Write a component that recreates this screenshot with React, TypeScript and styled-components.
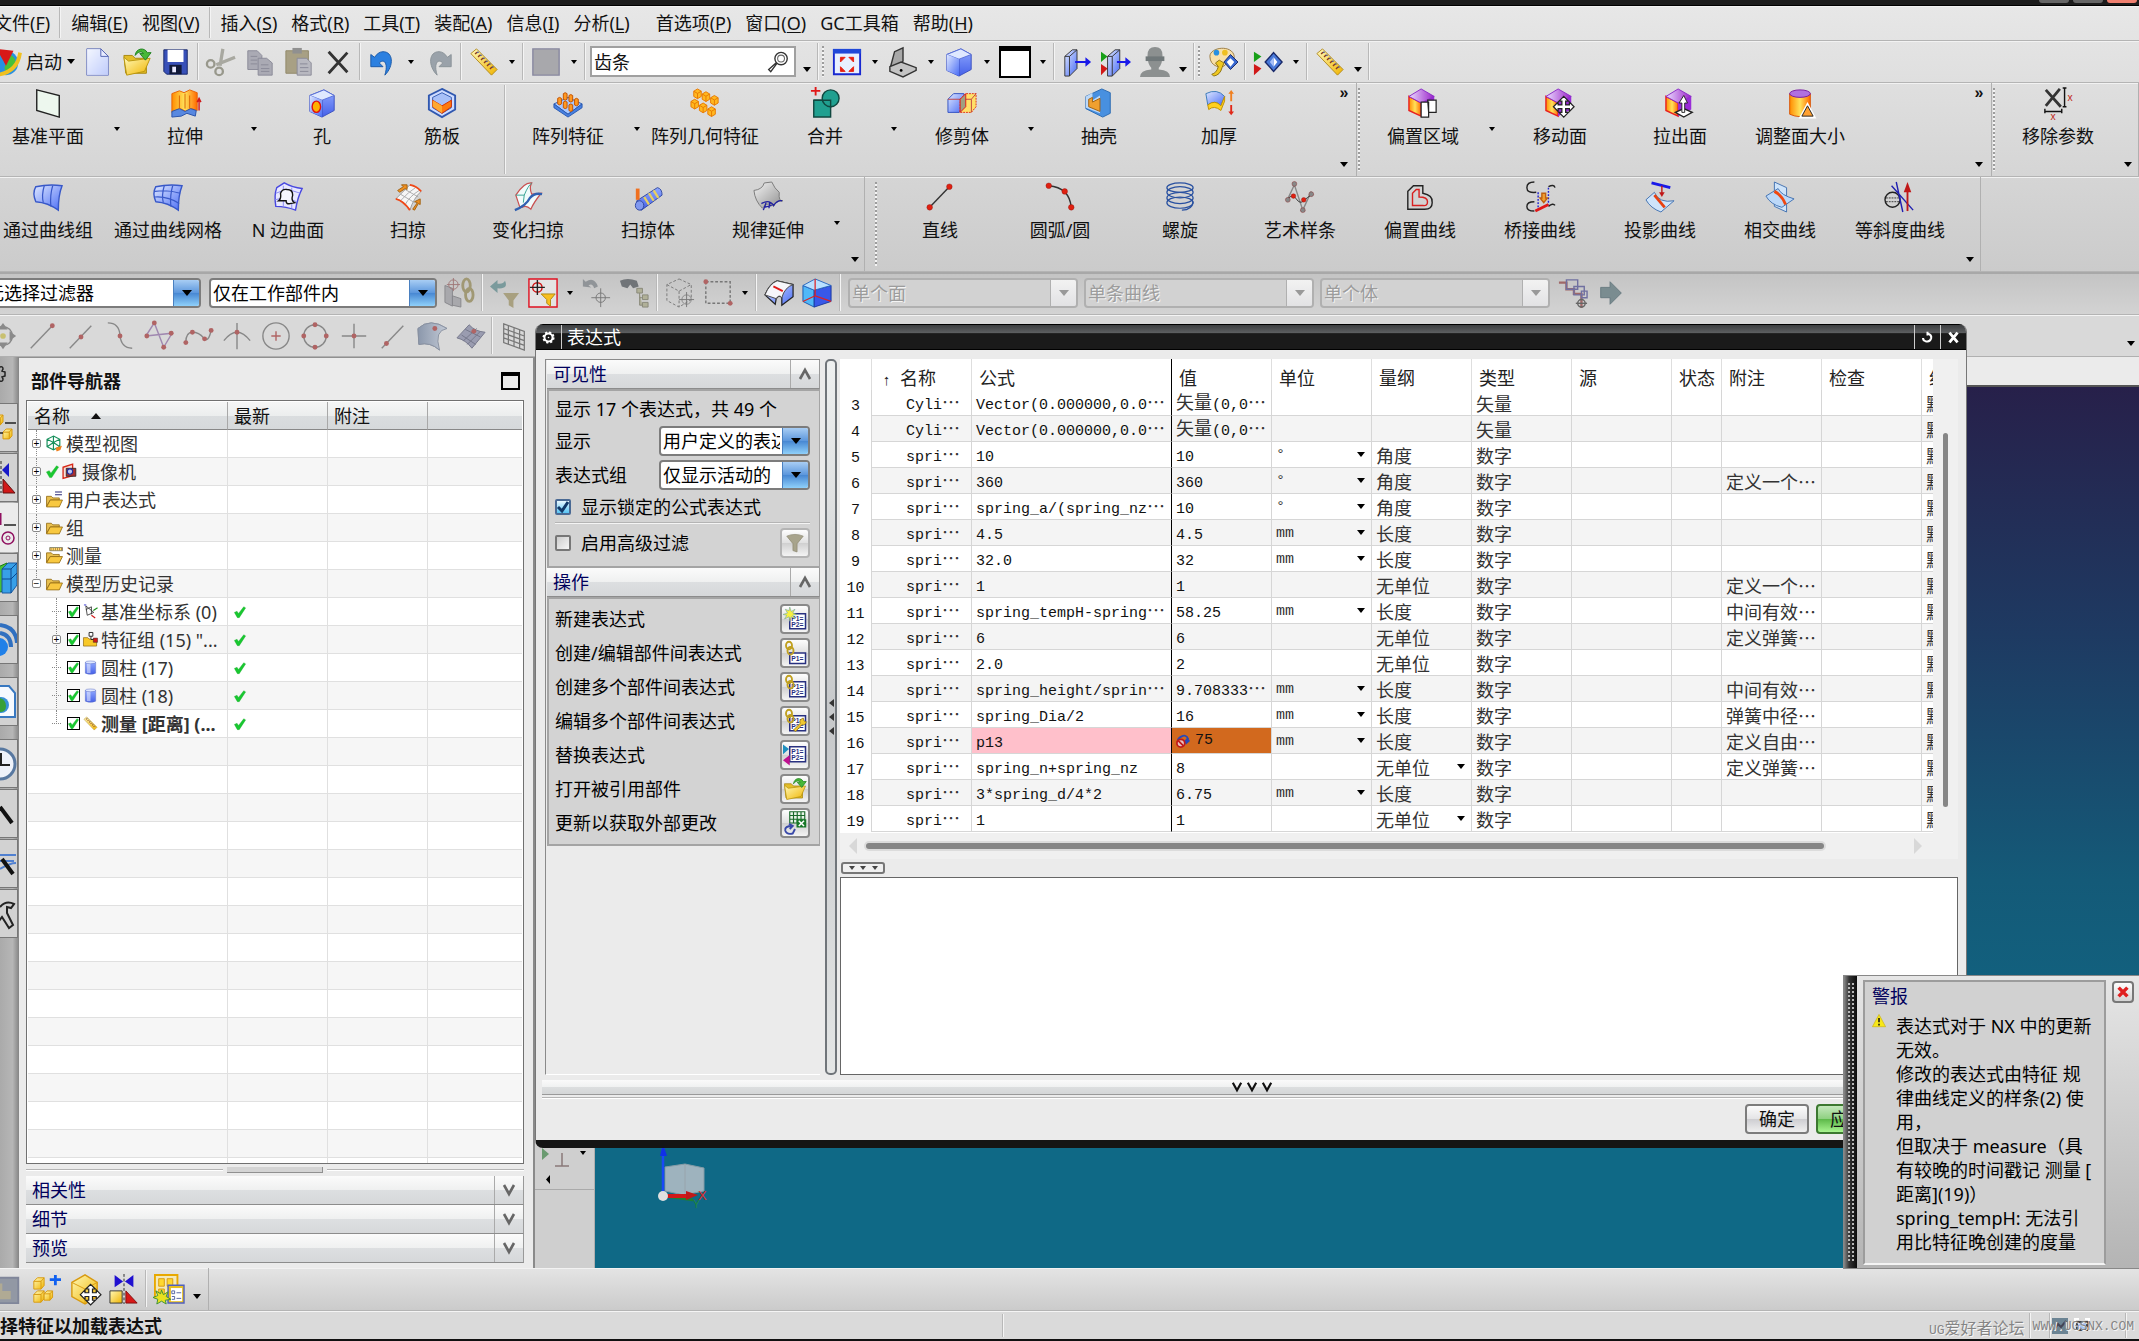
import React from "react";
import styled, { createGlobalStyle, css } from "styled-components";

const ui = `"Noto Sans", "Noto Sans CJK SC", sans-serif`;
const song = `"Noto Sans CJK SC", sans-serif`;
const mono = `"Liberation Mono", "Noto Sans CJK SC", monospace`;

const Global = createGlobalStyle`
  * { box-sizing: border-box; }
  body { margin: 0; overflow: hidden; font: 18px/24px ${ui}; color: #111; background: #d8d8d8; }
  button, input, select, textarea { font: inherit; color: inherit; margin: 0; }
  button { border: 0; background: none; padding: 0; }
  svg { display: block; flex: none; overflow: visible; }
`;

/* ---------- icons ---------- */

const Defs = () => (
  <HiddenSvg width="0" height="0" aria-hidden="true">
    <defs>
      <linearGradient id="blue" x1="0" y1="0" x2="1" y2="1"><stop offset="0" stopColor="#dfe8ff" /><stop offset="1" stopColor="#4a6df5" /></linearGradient>
      <linearGradient id="deep" x1="0" y1="0" x2="0" y2="1"><stop offset="0" stopColor="#8fa8ff" /><stop offset="1" stopColor="#4560e8" /></linearGradient>
      <linearGradient id="gold" x1="0" y1="0" x2="1" y2="1"><stop offset="0" stopColor="#fff9b8" /><stop offset="1" stopColor="#f0b400" /></linearGradient>
      <linearGradient id="orange" x1="0" y1="0" x2="1" y2="0"><stop offset="0" stopColor="#ff8c00" /><stop offset=".5" stopColor="#ffe25a" /><stop offset="1" stopColor="#ff6a00" /></linearGradient>
      <linearGradient id="purple" x1="0" y1="0" x2="1" y2="0"><stop offset="0" stopColor="#eadcff" /><stop offset="1" stopColor="#9a22c8" /></linearGradient>
      <linearGradient id="grey" x1="0" y1="0" x2="1" y2="1"><stop offset="0" stopColor="#f4f4f4" /><stop offset="1" stopColor="#8c8c8c" /></linearGradient>
      <linearGradient id="slate" x1="0" y1="0" x2="1" y2="0"><stop offset="0" stopColor="#8b97ab" /><stop offset="1" stopColor="#c3cad6" /></linearGradient>
    </defs>
  </HiddenSvg>
);

const HiddenSvg = styled.svg`position: absolute;`;

const cube = (
  <>
    <path d="M3 8 18 2 29 8v16l-13 7-13-6z" fill="url(#deep)" stroke="#3a4fc0" />
    <path d="M3 8 18 2 29 8 16 13z" fill="#dfe8ff" stroke="#5a70d8" />
    <path d="M16 13v18" stroke="#3a4fc0" />
    <path d="M3 8 16 13v18L3 25z" fill="url(#blue)" />
  </>
);
const faceCube = (
  <>
    <path d="M1 9 14 16v14L1 24z" fill="url(#orange)" stroke="#e82020" strokeWidth="1.5" />
    <path d="M14 16 28 9v14l-14 7z" fill="#9a2cd8" />
    <path d="M1 9 14 1l14 8-14 7z" fill="url(#purple)" stroke="#8a28c8" />
  </>
);
const ruler = (
  <>
    <path d="M2 7 8 2 30 24l-6 6z" fill="url(#gold)" stroke="#b08a20" />
    <path d="m7 6 19 19" stroke="#8a3a20" strokeWidth="3" strokeDasharray="1.5 3" />
    <path d="m9 5 18 18" stroke="#3040a0" strokeWidth="1.5" strokeDasharray="1.5 3" />
  </>
);
const folder = (
  <>
    <path d="M2 9h9l3 3h12v16H4z" fill="#e3bd28" stroke="#a8860c" />
    <path d="M7 15 30 12l-6 14L5 30 2 11z" fill="url(#gold)" stroke="#b8940c" />
    <path d="M14 9C15 1 24 0 27 6h4l-6 8-6-7h4c-2-3-6-2-9 2z" fill="#48b838" stroke="#208020" />
  </>
);
const moveCross = (x: number, y: number) => (
  <path transform={`translate(${x} ${y})`} d="m0-11 5 5H2v4h4v-3l5 5-5 5V2H2v4h3l-5 5-5-5h3V2h-4v3l-5-5 5-5v3h4v-4h-3z" fill="#fff" stroke="#222" strokeWidth="1.3" />
);
const box = (x: number, y: number, s = 7) => (
  <g key={`${x}-${y}`} transform={`translate(${x} ${y})`}>
    <path d={`M0 ${s * 0.3} ${s * 0.5} 0 ${s} ${s * 0.3} ${s} ${s} ${s * 0.5} ${s * 1.3} 0 ${s}z`} fill="#ffb820" stroke="#e87800" />
    <path d={`M0 ${s * 0.3} ${s * 0.5} ${s * 0.6} ${s} ${s * 0.3}M${s * 0.5} ${s * 0.6}V${s * 1.3}`} fill="none" stroke="#e87800" />
  </g>
);
const goldBox = (x: number, y: number, s: number) => (
  <g transform={`translate(${x} ${y})`}>
    <path d={`M0 ${s * 0.35} ${s * 0.35} 0H${s}V${s * 0.75}L${s * 0.7} ${s * 1.1}H0z`} fill="url(#gold)" stroke="#d89a10" />
    <path d={`M0 ${s * 0.35}H${s * 0.7}V${s * 1.1}M${s * 0.7} ${s * 0.35} ${s} 0`} fill="none" stroke="#d89a10" />
  </g>
);
const rdot = (x: number, y: number, r = 2.5, c = "#e02010") => <circle key={`${x}_${y}`} cx={x} cy={y} r={r} fill={c} stroke="#801010" strokeWidth=".4" />;
const mdot = (x: number, y: number) => <circle key={`${x}_${y}`} cx={x} cy={y} r="2.6" fill="#b06464" />;
const sheet = (x = 8, y = 8, two = true) => (
  <g transform={`translate(${x} ${y})`}>
    <path d={two ? "M0 0h21v20H0z" : "M0 4h21v14H0z"} fill="#fff" stroke="#283080" strokeWidth="2" />
    <text x="2" y={two ? 9 : 15} fontSize="9" fontWeight="700" fontFamily="Liberation Sans, sans-serif" fill="#283080">P1=</text>
    {two && <text x="2" y="18" fontSize="9" fontWeight="700" fontFamily="Liberation Sans, sans-serif" fill="#283080">P2=</text>}
  </g>
);
const chain = (c: string) => (
  <g fill="none" stroke={c} strokeWidth="2.5"><ellipse cx="8" cy="6" rx="4" ry="5" /><ellipse cx="10" cy="13" rx="4" ry="5" /></g>
);

const icons: Record<string, React.ReactNode> = {
  nx: <><circle cx="16" cy="17" r="13" fill="#2890e0" /><path d="M14 6q12 2 12 10t-8 12q-6-4-2-10t-2-12" fill="#48c038" /><path d="M4 30Q28 28 31 6" fill="none" stroke="#f0c020" strokeWidth="4" /><path d="M6 2 24 4 16 20z" fill="#d81818" /></>,
  file: <><path d="M4 2h15l8 8v20H4z" fill="url(#blue)" stroke="#5060b0" /><path d="M4 2h15l8 8v20H4z" fill="#fff" fillOpacity=".65" /><path d="M19 2v8h8z" fill="#e8ecff" stroke="#5060b0" /></>,
  open: folder,
  save: <><path d="M3 3h25v26H6l-3-3z" fill="#3850b8" stroke="#182868" /><path d="M7 3h17v13H7z" fill="#fff" /><path d="M9 19h13v10H9z" fill="#101838" /><path d="M12 21h4v6h-4z" fill="#e8e8ff" /></>,
  cut: <g stroke="#98988c" fill="none" strokeWidth="2.5"><path d="M18 2 15 20M31 11 11 19" stroke="#a8a8a0" strokeWidth="3.5" /><circle cx="5" cy="18" r="4" /><circle cx="14" cy="26" r="4" /></g>,
  copy: <g fill="#aaaab4" stroke="#8a8a98"><path d="M3 4h10l5 5v15H3z" /><path d="M14 12h9l6 5v13H14z" /><path d="M6 10h7M6 14h7M6 18h7M17 19h8M17 23h9M17 26h9" /></g>,
  paste: <g><path d="M2 4h24v24H2z" fill="#a8a084" stroke="#908868" /><path d="M9 1h10v6H9z" fill="#909090" /><path d="M14 12h10l5 5v13H14z" fill="#b8b8c0" stroke="#8a8a98" /><path d="M17 18h8M17 22h9M17 26h9" stroke="#8a8a98" /></g>,
  del: <path d="M6 5 26 27M26 6 6 28" stroke="#333" strokeWidth="3" />,
  undo: <path d="M3 8v13h13l-4-4c5-5 10 0 6 13C28 20 27 5 16 5c-4 0-7 3-9 6z" fill="#2c80e0" stroke="#1858a8" />,
  redo: <path d="M29 8v13H16l4-4c-5-5-10 0-6 13C4 20 5 5 16 5c4 0 7 3 9 6z" fill="#9aa2aa" stroke="#8a9298" />,
  ruler,
  swatch: <path d="M2 2h28v28H2z" fill="#a8a8ac" stroke="#8888a0" strokeWidth="1.5" />,
  fit: <><path d="M2 3h28v26H2z" fill="#e8f0ff" stroke="#1828d0" strokeWidth="2" /><path d="M1 2h30v5H1z" fill="#2048d8" /><path d="M9 11h5l-5 5zM23 11h-5l5 5zM9 26h5l-5-5zM23 26h-5l5-5z" fill="#e82010" stroke="#e82010" /></>,
  seat: <><path d="M3 20 7 5l9-4v14l-4 6z" fill="#a8a8a8" stroke="#333" strokeWidth="1.5" /><path d="m2 21 12-5 16 6v3l-14 7-14-6z" fill="#c4c4c4" stroke="#333" strokeWidth="1.5" /><circle cx="14" cy="25" r="1.5" /></>,
  cube,
  white: <><path d="M1 1h30v30H1z" fill="#fff" stroke="#000" strokeWidth="2" /><path d="M0 0h32v5H0z" /></>,
  clip: <><path d="M3 10 11 3h5v20l-8 8H3z" fill="url(#blue)" stroke="#333" /><path d="M3 10h5v21M8 10l8-7" fill="none" stroke="#333" /><path d="M14 15h11v-4l6 5-6 5v-4H14z" fill="#1818e8" /></>,
  clip2: <><path d="m0 5 7 5-7 6z" fill="#18a018" /><path d="m0 18 7 5-7 7z" fill="#d01818" /><path d="M7 10 15 3h5v20l-8 8H7z" fill="url(#blue)" stroke="#333" /><path d="M7 10h5v21M12 10l8-7" fill="none" stroke="#333" /><path d="M17 15h9v-4l6 5-6 5v-4h-9z" fill="#1818e8" /></>,
  person: <><path d="M8 9q0-9 8-9t8 9q0 9-4 13v2q12 1 12 8H0q0-7 12-8v-2Q8 18 8 9z" fill="#8c9090" /><path d="M6 10h20v5H6z" fill="#70787a" /></>,
  palette: <><path d="M2 10C2 0 26-3 28 10c0 8-8 4-9 8-2 6-17 4-17-8z" fill="#f8e0a8" stroke="#9a7a40" /><circle cx="9" cy="6" r="3" fill="#2890e0" /><circle cx="18" cy="6" r="3" fill="#f0c020" /><circle cx="24" cy="11" r="2" fill="#e02020" /><path d="m24 8 8 8-8 8-7-8z" fill="#3868d0" stroke="#182868" /><path d="m24 12 4 4-4 5-4-5z" fill="#fff" /><path d="M4 29q5-1 7-8l-3-4 4-3 5 3-2 5q-2 8-9 9z" fill="#f0c820" stroke="#8a7010" /></>,
  vis: <><path d="m1 5 8 5-8 6z" fill="#18a018" /><path d="m1 18 8 5-8 7z" fill="#d01818" /><path d="m22 6 9 10-9 10-9-10z" fill="#4878d8" stroke="#182868" strokeWidth="1.5" /><path d="m22 11 4 5-4 5z" fill="#fff" /><path d="m22 11-4 5 4 5z" fill="#a8c0f8" /></>,
  plane: <path d="M4 2 28 8v23L4 24z" fill="#edf7ee" stroke="#222" strokeWidth="1.5" />,
  extrude: <><path d="M2 6 10 3l5 2 6-3 8 3v19l-6-2-6 3-6-3-9 4z" fill="url(#orange)" stroke="#e86000" /><path d="M2 25l8-3 6 3 6-3 6 2-1 6-9-3-6 3-10 1z" fill="#5888e0" stroke="#2850a8" /><path d="M10 8v14M16 6v16M21 8v14" stroke="#d86000" /><path d="M31 24V13M29 15l2-4 2 4" stroke="#d01818" fill="none" strokeWidth="1.5" /></>,
  hole: <>{cube}<ellipse cx="10" cy="20" rx="4.500" ry="6" fill="#ffb000" stroke="#e01010" strokeWidth="1.500" /></>,
  rib: <><path d="m16 1 14 7v15l-14 8L2 23V8z" fill="#cfdcff" stroke="#3058b0" strokeWidth="2" /><path d="m16 5 10 5v11l-10 6-10-6V10z" fill="#a8c0f8" stroke="#3058b0" /><path d="m6 13 10 6 10-6v7l-10 7-10-7z" fill="#ff7a10" stroke="#d83000" /><path d="m6 13 10 6v8l-10-7z" fill="#ffa830" /></>,
  array: <><path d="m1 17 15-7 15 7-15 11z" fill="#a8c8ff" stroke="#2858b0" /><path d="M1 17v4l15 10 15-10v-4L16 28z" fill="#4880e0" stroke="#2858b0" />{[[7, 11], [13, 6], [19, 8], [25, 12], [13, 15], [19, 18]].map(([x, y]) => <path key={`${x},${y}`} d={`M${x - 2} ${y}q2-2 4 0v6q-2 2-4 0z`} fill="#ff9820" stroke="#c05000" />)}</>,
  geo: <>{[[4, 1], [13, 4], [22, 8], [1, 12], [10, 16], [19, 20]].map(([x, y]) => box(x, y, 8))}</>,
  unite: <><path d="M4 13h18v18H4z" fill="#20a090" stroke="#104840" strokeWidth="1.500" /><circle cx="22" cy="11" r="9" fill="#20a090" stroke="#104840" strokeWidth="1.500" /><path d="M4 13h18v8" fill="none" stroke="#104840" strokeWidth="1.500" /><path d="M6-1v9M1 3h10" stroke="#e01818" strokeWidth="2" /></>,
  trim: <><path d="M1 12 7 6h11v14l-5 6H1z" fill="url(#blue)" stroke="#3050c0" /><path d="M14 12l6-6h11v14l-5 6H14z" fill="#ffe068" stroke="#e03010" strokeDasharray="2 1" /><path d="M1 12h25v14M26 12l5-6" fill="none" stroke="#c04040" /><path d="M14 12l6-6v14l-6 6z" fill="#a0a080" stroke="#e01818" /></>,
  shell: <><path d="M2 9 19 1l9 4v22l-8 4L2 22z" fill="#4890e0" stroke="#2868b0" /><path d="m2 9 7-4v8l8-5v19L2 21z" fill="#bcd8f8" /><path d="m5 12 4-2v5l8-4v14L5 20z" fill="#f0a030" stroke="#a06010" /></>,
  thick: <><path d="M2 6q12-6 20 3l-4 10Q12 12 4 18z" fill="url(#blue)" stroke="#3878b8" /><path d="M4 18q8-6 14 1l4-10v5l-4 10q-7-6-13-1z" fill="#ffd020" stroke="#c09000" /><path d="M28 14V6h-2l3-4 3 4h-2v8z" fill="#f08020" /><path d="M28 18v7h-2l3 4 3-4h-2v-7z" fill="#e02818" /></>,
  offReg: <>{faceCube}<path d="M14 15h8v16h-8zM21 13h9v13h-8z" fill="#fff" stroke="#222" strokeWidth="1.300" /></>,
  moveFace: <>{faceCube}{moveCross(20, 20)}</>,
  pull: <>{faceCube}<path d="m11 26 9-4 9 4-9 5z" fill="#fff" stroke="#222" strokeWidth="1.500" /><path d="m20 8 4 8h-3v10h-3V16h-3z" fill="#fff" stroke="#222" /></>,
  resize: <><path d="M5 6v22q11 5 22 0V6z" fill="url(#orange)" stroke="#d85000" /><ellipse cx="16" cy="6" rx="11" ry="4" fill="#b070e0" stroke="#7818a0" /><path d="m24 18 7 13H17z" fill="#ffa030" stroke="#fff" strokeWidth="3" /><path d="m24 19 6 11H18z" fill="#ffa030" stroke="#222" /></>,
  rmParam: <><path d="M3 2 19 20M18 1 3 19" stroke="#333" strokeWidth="3" /><path d="M23 0v20M21 0h4M21 20h4M2 25h18M2 22v5M20 22v5" stroke="#111" strokeWidth="1.500" /><text x="26" y="14" fontSize="11" fontFamily="Liberation Sans, sans-serif" fill="#c02818">x</text><text x="8" y="34" fontSize="11" fontFamily="Liberation Sans, sans-serif" fill="#c02818">x</text></>,
  curves: <><path d="M3 5q14-3 28-1-4 10-4 26Q16 22 3 21-1 12 3 5z" fill="url(#blue)" stroke="#3858c8" strokeWidth="1.500" /><path d="M12 4q-3 10-1 18M21 4q-3 10-2 22" fill="none" stroke="#3858c8" strokeWidth="1.300" /></>,
  mesh: <><path d="M3 5q14-3 28-1-4 10-4 26Q16 22 3 21-1 12 3 5z" fill="url(#blue)" stroke="#3858c8" strokeWidth="1.500" /><path d="M12 4q-3 10-1 18M21 4q-3 10-2 22M2 10q14-2 27 2M2 16q14-1 26 7" fill="none" stroke="#3858c8" strokeWidth="1.300" /></>,
  nside: <><path d="M4 6 12 1q9 5 19 6-5 10-7 23Q14 26 3 26 1 14 4 6z" fill="#e8e8ff" stroke="#4848e0" strokeWidth="1.500" /><path d="M3 12q12-6 26 0M2 19q12-4 23 2M11 4v22M20 6v22" fill="none" stroke="#8888f0" /><path d="M6 20q3-2 2-8 2-5 7-4 6 0 6 6-2 6 2 8l-5 1q-4 1-4-3H6z" fill="#f4f4ff" stroke="#111" strokeWidth="1.500" /></>,
  sweep: <><path d="M3 18 18 3q7 1 12 7-8 7-12 20Q12 20 3 18z" fill="#f6f6f6" stroke="#999" /><path d="m8 13 15 9M13 8l14 8M8 20Q17 10 24 6M13 24Q18 15 28 9" stroke="#aaa" fill="none" /><path d="M18 3q7 1 12 7M3 18q8 2 15 12" fill="none" stroke="#f04818" strokeWidth="2" /><path d="m5 9 6-4-2-2h6v5l-2-1-6 4zM21 29l5-7-3-1 6-3v6l-2-1-4 7z" fill="#f09020" stroke="#a06010" /></>,
  varsweep: <><path d="M7 26 3 14Q12 0 20 1q-3 5 0 12l10-1Q22 22 19 29q-5-5-9-2z" fill="#f0fbfb" stroke="#c85050" strokeWidth="1.300" /><path d="M3 14h9l-1 8M12 14Q16 4 20 1" fill="none" stroke="#30a090" /><path d="M2 30Q14 25 18 17q5-6 13-4" fill="none" stroke="#3060b0" strokeWidth="2.500" /></>,
  tube: <><path d="M4 20 26 6q5 1 5 8L9 30q-6-1-5-10z" fill="url(#deep)" stroke="#3048a0" /><ellipse cx="7" cy="25" rx="4.500" ry="5" fill="#8098f0" stroke="#3048a0" /><path d="m12 16 5 8M17 12l5 8M22 9l5 8" stroke="#e8d060" strokeWidth="2.500" /><path d="M3 7h4v12H3z" fill="#f07020" /></>,
  law: <><path d="M1 9Q10 8 12 1l8-1q3 7 8 11-1 10 4 9-8 0-10 6-6-6-12 2Q2 20 1 9z" fill="url(#grey)" stroke="#777" /><path d="M9 23q8-5 13 2 4-6 9-5M11 30l3-8M17 28l1-7M12 27l8-2" fill="none" stroke="#2020a0" strokeWidth="1.500" /></>,
  line: <><path d="M5 27 26 5" stroke="#333" strokeWidth="1.500" />{rdot(5, 27, 3)}{rdot(26, 5, 3)}</>,
  arc: <><path d="M4 4Q26 6 28 27" fill="none" stroke="#333" strokeWidth="1.500" />{rdot(4, 4, 3)}{rdot(21, 10, 3)}{rdot(28, 27, 3)}</>,
  helix: <g fill="none" stroke="#2850a0" strokeWidth="1.300"><ellipse cx="16" cy="6" rx="14" ry="5" /><ellipse cx="16" cy="11" rx="14" ry="6" /><ellipse cx="16" cy="17" rx="14" ry="6" /><ellipse cx="16" cy="22" rx="14" ry="6" /><path d="M30 21q-1 9-12 9" /></g>,
  spline: <><path d="m3 18 7-15 9 27 9-20" fill="none" stroke="#888" strokeWidth="1.500" /><path d="M3 18q5-6 9 0t8 2 8-6" fill="none" stroke="#333" />{rdot(3, 19, 2.6, "#888")}{rdot(10, 2, 2.6, "#888")}{rdot(19, 30, 2.6, "#888")}{rdot(28, 13, 2.6, "#888")}{rdot(9, 15)}{rdot(20, 19)}</>,
  offset: <g fill="none" strokeWidth="1.500"><path d="M3 29V10l6-6h10v8q11 2 10 10 0 7-8 7z" stroke="#222" /><path d="M8 25V12l4-4h3v8q9 0 9 5t-5 4z" stroke="#d82020" /></g>,
  bridge: <g fill="none" strokeWidth="1.500"><path d="M10 0Q2 0 2 6t10 5M10 21q-8 0-8 5t8 5M25 5q6-3 7 1M25 26q5-4 7-1" stroke="#222" /><path d="M14 11v18M25 6v18" stroke="#2020d0" strokeDasharray="2 1.500" /><path d="m11 31 14-7" stroke="#e01818" strokeWidth="3" /><path d="M18 12h4v5h2l-4 5-4-5h2z" fill="#f0a030" stroke="#c06010" /></g>,
  project: <><path d="m1 19 9-8q5 12 21 9L17 32Q6 28 1 19z" fill="#cfe4fa" stroke="#4070b0" /><path d="m10 14 11 13" stroke="#e84010" strokeWidth="3" /><path d="m7 1 20 5" stroke="#1818e8" strokeWidth="3" /><path d="M18 4v8" stroke="#c01818" strokeWidth="1.500" /><path d="m15 11 3 5 3-5z" fill="#c01818" /></>,
  intersect: <><path d="m10 0 13 6v26l-13-6z" fill="#cfe4fa" stroke="#4070b0" /><path d="m1 15 13-8q3 7 17 11l-13 9Q6 24 1 15z" fill="#bcd8f8" stroke="#4070b0" /><path d="M10 10q8 4 12 14" stroke="#f04810" strokeWidth="3" fill="none" /></>,
  iso: <><circle cx="8" cy="19" r="8" fill="none" stroke="#222" strokeWidth="1.500" /><path d="M1 17h15M1 21h15" stroke="#333" strokeDasharray="2 1" /><path d="M7 4 30 30M12 0l7 32" stroke="#2020b0" strokeWidth="1.500" /><path d="M24 31V9" stroke="#c01818" strokeWidth="2" /><path d="m20 11 4-11 4 11z" fill="#c01818" /></>,
  assoc: <><path d="M1 8 9 11v19L1 26zM9 19l9 3v9l-9-2z" fill="#a8a8ac" stroke="#88888c" /><circle cx="10" cy="7" r="5" fill="none" stroke="#a07878" /><path d="M10 0v14M3 7h14" stroke="#a07878" /><g fill="none" stroke="#a09874" strokeWidth="3"><ellipse cx="24" cy="8" rx="4" ry="7" /><ellipse cx="27" cy="18" rx="4" ry="7" /></g></>,
  resetF: <><path d="M16 3q4 9-8 8v5L0 9l8-7v4q6 1 8-3z" fill="#7a9a9c" /><path d="M14 16h17l-6 8v8l-5-3v-5z" fill="#a8a080" /></>,
  redF: <><path d="M1 1h30v30H1z" fill="#e4e4e4" stroke="#e01020" strokeWidth="1.500" /><circle cx="10" cy="10" r="5" fill="none" stroke="#d01010" strokeWidth="1.500" /><path d="M10 2v16M2 10h16" stroke="#222" strokeWidth="1.500" /><path d="M14 17h15l-5 6v7l-4-3v-4z" fill="#f8c020" stroke="#b08810" /></>,
  back: <><path d="M2 9V1l3 3q9-6 13 5l-4 2Q12 5 8 8l3 2z" fill="#909498" /><g stroke="#777" fill="none"><circle cx="21" cy="21" r="5" /><path d="M21 11v20M11 21h20" /></g></>,
  find: <><path d="M1 3q8-4 18 0l2 6-6 2-3-4-3 4-6-2z" fill="#707478" /><path d="M19 11h6v5h-6zM25 18h6v5h-6zM25 26h6v5h-6zM22 16v13h3M22 21h3" fill="#b0b098" stroke="#888878" /></>,
  dashcube: <g stroke="#777" fill="none"><path d="m15 1 13 6v16l-13 8L2 24V7zM2 7l13 7 13-7M15 14v17" strokeDasharray="3 2" /><circle cx="23" cy="23" r="5" stroke="#888" /><path d="M23 15v16M15 23h16" /></g>,
  rect: <><path d="M3 4h26v23H3z" fill="none" stroke="#777" strokeWidth="1.500" strokeDasharray="3 2" />{mdot(3, 4)}{mdot(29, 27)}</>,
  slab: <><path d="M1 18Q6 6 14 3l17 4v13l-12 9v-8q-3-4-6 1l-1 6z" fill="url(#blue)" stroke="#222" strokeWidth="1.300" /><path d="M1 18Q6 6 14 3l17 4Q22 10 19 21q-3-4-6 1z" fill="#f6f6fa" stroke="#444" /><path d="m10 9 10 5" stroke="#e01818" strokeWidth="2" /></>,
  gcube: <><path d="M1 8 13 13v18L1 25z" fill="#50b8f8" stroke="#1858b0" /><path d="M13 13 31 8v17l-18 6z" fill="#3858e8" stroke="#1838a0" /><path d="m1 8 13-7 17 7-18 5z" fill="#b8e0ff" stroke="#2868c0" /><path d="M14 1v18l17 6M14 19 1 25" stroke="#e02020" fill="none" strokeWidth="1.300" /></>,
  chain: <g fill="none" strokeWidth="1.500"><path d="M1 5h8v7h8v5h8v15" stroke="#a06868" strokeWidth="2.500" /><path d="M9 2h12v10H9zM17 9h11v9H17zM25 14h6v7h-6z" stroke="#7070a0" /><circle cx="25" cy="27" r="4" stroke="#666" /><path d="M19 27h12" stroke="#666" /></g>,
  right: <path d="M5 10h10V4l12 12-12 12v-7H5z" fill="#7a8c90" stroke="#687a80" />,
  sMove: <><circle cx="16" cy="16" r="10" fill="none" stroke="#888" strokeWidth="1.500" /><path d="m16 2 5 7H11zM16 30l5-7H11zM2 16l7-5v10zM30 16l-7-5v10z" fill="#8a8a8a" /><circle cx="16" cy="16" r="3" fill="#c8c070" /></>,
  sLine: <><path d="M4 29 27 5" stroke="#888" strokeWidth="1.500" />{mdot(27, 5)}</>,
  sMid: <><path d="M4 29 27 5" stroke="#888" strokeWidth="1.500" />{mdot(16, 17)}</>,
  sCtl: <><path d="M3 2q12 0 13 13 1 14 13 14" fill="none" stroke="#888" strokeWidth="1.500" />{mdot(16, 16)}</>,
  sPoly: <><path d="m2 16 9-14 10 26 9-15L2 16" fill="none" stroke="#a088b0" strokeWidth="1.500" />{[[3, 16], [11, 2], [21, 28], [29, 13]].map(([x, y]) => mdot(x, y))}</>,
  sSpl: <><path d="M3 23q0-11 7-11t12 6 8-8" fill="none" stroke="#888" strokeWidth="1.500" />{[[3, 23], [10, 12], [23, 19], [30, 10]].map(([x, y]) => mdot(x, y))}</>,
  sInt: <><path d="M2 21q14-18 28 0M16 2v28" fill="none" stroke="#888" strokeWidth="1.500" />{mdot(16, 12)}</>,
  sCen: <><circle cx="16" cy="16" r="14" fill="none" stroke="#888" strokeWidth="1.500" /><path d="M16 11v10M11 16h10" stroke="#b06464" strokeWidth="1.500" /></>,
  sQuad: <><circle cx="16" cy="16" r="12" fill="none" stroke="#888" strokeWidth="1.500" />{[[16, 4], [16, 28], [4, 16], [28, 16]].map(([x, y]) => mdot(x, y))}</>,
  sPt: <><path d="M3 16h26M16 3v26" stroke="#888" strokeWidth="1.500" />{mdot(16, 16)}</>,
  sOn: <><path d="M4 29 27 5" stroke="#888" strokeWidth="1.500" />{mdot(9, 24)}</>,
  sFace: <><path d="M1 8Q14-4 32 8-2 6 24 31 14 22 2 25z" fill="url(#slate)" stroke="#8890a0" /><path d="M1 8Q14-4 32 8q-14 2-8 23Q14 22 2 25z" fill="url(#slate)" stroke="#8890a0" />{mdot(19, 8)}</>,
  sMesh: <><path d="M1 18 14 4q6 7 17 8L17 29Q10 20 1 18z" fill="#9a9cb0" stroke="#74768a" /><path d="m6 15 15 10M10 9l16 8M8 21 22 8M12 25 26 11" stroke="#74768a" />{mdot(19, 11)}</>,
  sGrid: <path d="M5 3 27 11v20L5 23zM5 8l22 8M5 13l22 8M5 18l22 8M10 5v20M16 7v20M22 9v20" fill="none" stroke="#777" strokeWidth="1.300" />,
  b0: <><path d="M-8 4h36v27H-8z" fill="#9298a4" stroke="#80869a" strokeWidth="2" /><path d="M2 10h9v8h9v9H-6v-9h8z" fill="#b0aa94" /></>,
  bAdd: <>{goldBox(3, 4, 11)}{goldBox(3, 18, 11)}{goldBox(14, 18, 9)}<path d="M26 1v11M20 6h12" stroke="#1060f0" strokeWidth="3" /></>,
  bMove: <><path d="m2 9 14-8 13 8v15l-13 8-14-8z" fill="url(#gold)" stroke="#d89a10" strokeWidth="1.500" /><path d="m2 9 14 7 13-7M16 16v16" stroke="#d89a10" fill="none" />{moveCross(22, 22)}</>,
  bMir: <><path d="M6 1v13l9-6zM26 1v13l-9-6z" fill="#2010d0" /><path d="M1 18h13v13H1z" fill="url(#gold)" stroke="#333" /><path d="M18 18v13h12z" fill="#d81818" stroke="#801010" /><path d="M16 0v32" stroke="#222" strokeDasharray="3 2" /></>,
  bClip: <><path d="M1 1h24v24H1z" fill="#f4e9b8" stroke="#e8a800" strokeWidth="2" /><path d="M5 5h6v8H5zM14 5h6v8h-6zM5 16h6v7H5z" fill="#ffd830" stroke="#d89a10" /><path d="M15 12h17v19H15z" fill="#e8c020" stroke="#5060c0" strokeWidth="1.500" /><path d="M18 15h12v14H18z" fill="#fff" /><path d="M19 18h3v3h-3zM19 24h3v3h-3M24 20h5M24 26h5" fill="none" stroke="#5060a0" /><path d="m8 17 2 5 5-3-2 5 5 3-6 1 1 4-5-3-5 3 1-5-5-2 5-2-2-5 5 3z" fill="#e8e020" stroke="#389038" /></>,
  funnel: <path d="M4 6q12-5 24 0l-9 11v12l-6-2V17z" fill="#a8a48c" stroke="#8c8870" />,
  newExp: <>{sheet(9, 9)}<path d="m9 0 2 6 5-3-3 5 6 2-6 1 3 5-5-3-2 6-1-6-6 3 3-5-5-1 6-2-3-5 5 2z" fill="#f8f040" stroke="#70a8a0" strokeWidth=".8" /></>,
  exp1: <>{sheet(9, 12, false)}{chain("#c0a020")}</>,
  exp2: <>{sheet(9, 9)}{chain("#c0a020")}</>,
  exp3: <>{sheet(9, 9)}{chain("#c0a020")}<path d="m14 28 9-9q-2-5 4-7l1 4 3 1q-1 5-6 4l-8 9z" fill="#f0c830" stroke="#907010" /></>,
  repl: <>{sheet(9, 5)}<path d="m0 2 8 6-8 7z" fill="#2090c0" /><path d="m9 16-9 7 9 7z" fill="#c01090" /></>,
  excel: <><path d="M9 1h20v15H9zM9 6h20M9 11h20M14 1v15M19 1v15M24 1v15" fill="#e8f4e8" stroke="#186828" strokeWidth="1.500" /><path d="M18 11h13v11H18z" fill="#187828" /><path d="m21 13 7 7M28 13l-7 7" stroke="#fff" strokeWidth="2" /><path d="M12 20q-10 0-9 6 2 6 10 4l3-6M8 17l5 3-4 4" fill="none" stroke="#3848a8" strokeWidth="2.500" /></>,
  gear: <><circle cx="16" cy="16" r="10" fill="none" stroke="currentColor" strokeWidth="5" /><circle cx="16" cy="16" r="12" fill="none" stroke="currentColor" strokeWidth="6" strokeDasharray="5 4.400" /><circle cx="16" cy="16" r="2" fill="currentColor" /></>,
  reset: <path d="M16 6q11 3 9 12-3 10-14 7-6-2-6-8M16 2v9" fill="none" stroke="#fff" strokeWidth="5" />,
  close: <path d="M6 4 26 28M26 4 6 28" stroke="#fff" strokeWidth="7" />,
  redx: <path d="M6 6 26 26M26 6 6 26" stroke="#e02020" strokeWidth="8" />,
  glass: <><circle cx="19" cy="11" r="9" fill="none" stroke="#333" strokeWidth="2" /><circle cx="19" cy="11" r="5" fill="none" stroke="#666" strokeWidth="1.500" /><path d="m13 18-9 12-3-3 11-10" fill="none" stroke="#333" strokeWidth="2" /></>,
  warn: <><path d="m16 1 15 28H1z" fill="#f8e818" stroke="#c8b010" strokeWidth="1.500" /><path d="M16 9v10M16 22v4" stroke="#111" strokeWidth="3.500" /></>,
  tView: <><path d="m14 2 12 6v14l-12 6-12-6V8zM2 8l12 6 12-6M14 14v14M14 2v12M2 22l12-8 12 8" fill="none" stroke="#18905c" strokeWidth="2.200" /><path d="m18 24 12-4-3 8-7 3z" fill="#f08020" /></>,
  tCam: <><path d="m2 8 18-6v22L2 29z" fill="#f8e0d8" stroke="#d82818" strokeWidth="2.500" /><path d="M8 10h18v15H8z" fill="#a83030" stroke="#222" strokeWidth="1.500" /><circle cx="15" cy="16" r="5" fill="#c0c8f0" stroke="#2030a0" strokeWidth="2" /></>,
  tFold: <><path d="M1 8h9l3 3h12v4H8L1 27z" fill="#e8c050" stroke="#906810" strokeWidth="1.500" /><path d="M8 15h23l-6 13H1z" fill="#f8c840" stroke="#906810" strokeWidth="1.500" /></>,
  tExp: <><path d="M1 10h9l3 3h12v4H8L1 29z" fill="#e8c050" stroke="#906810" strokeWidth="1.500" /><path d="M8 17h23l-6 13H1z" fill="#f8c840" stroke="#906810" strokeWidth="1.500" /><path d="M17 2h13M17 7h13" stroke="#282878" strokeWidth="2" /></>,
  tMea: <><path d="M1 11h9l3 3h12v4H8L1 29z" fill="#e8c050" stroke="#906810" strokeWidth="1.500" /><path d="M8 18h23l-6 12H1z" fill="#f8c840" stroke="#906810" strokeWidth="1.500" /><path d="M7 1h24v6H7z" fill="#f8e868" stroke="#333" /><path d="M9 4h21" stroke="#a03030" strokeWidth="4" strokeDasharray="1 3" /></>,
  tCsys: <g fill="none" stroke="#333" strokeWidth="1.800"><path d="m6 4 3 20 14-6zM6 12l12-6v16" /><path d="m22 14 9-6" stroke="#189018" strokeWidth="2.500" /><path d="m18 24 8 6" stroke="#d01818" strokeWidth="2.500" /><path d="M2 2h5" stroke="#2020d0" /></g>,
  tGrp: <><path d="M1 12h9l3 3h16v15H1z" fill="#f8c828" stroke="#906810" strokeWidth="1.500" /><path d="M13 1h8v8h-8zM17 9v7h6" fill="#fff" stroke="#222" strokeWidth="2" /><path d="M22 13h9v9h-9z" fill="#d01818" stroke="#222" /></>,
  tCyl: <><path d="M5 5v23q11 5 22 0V5z" fill="url(#deep)" stroke="#5868c0" /><path d="M8 6v22h8V6z" fill="#fff" opacity=".5" /><ellipse cx="16" cy="5" rx="11" ry="3" fill="#dfe8ff" stroke="#5868c0" /></>,
  tRul: ruler,
  check: <path d="m1 17 7-3 4 6L26 2l5 3-17 26h-5z" fill="#18c830" stroke="#18a828" />,
  link: <><path d="M28 12q-4-12-16-6-8 4-8 10" fill="none" stroke="#2848b8" strokeWidth="4" /><path d="m26 8 6 8-9 8-5-7z" fill="#2848b8" /><circle cx="11" cy="21" r="9" fill="#e8c0c0" stroke="#c01818" strokeWidth="4" /><path d="m5 15 12 12" stroke="#c01818" strokeWidth="4" /></>,
};

const Icon = ({ name, size = 32 }: { name: string; size?: number }) => (
  <svg width={size} height={size} viewBox="0 0 32 32" aria-hidden="true">{icons[name]}</svg>
);

/* ---------- shared parts ---------- */

const barLine = css`border-bottom: 1px solid #b4b4b4; box-shadow: inset 0 1px #f2f2f2;`;

const Frame = styled.div`position: relative; display: flex; flex-direction: column; height: 100vh; overflow: hidden;`;

const TopStrip = styled.header`
  height: 6px; flex: none; background: #1c1c1c; border-bottom: 1px solid #000;
  display: flex; justify-content: flex-end; gap: 4px; padding-right: 2px;
`;
const WinKey = styled.button<{ $c: string }>`width: 30px; height: 3px; background: ${(p) => p.$c}; border-radius: 0 0 3px 3px;`;

const Ribbon = styled.div`display: flex; flex-direction: column; flex: none; background: linear-gradient(#e7e7e7, #cbcbcb);`;

const Sep = styled.span`align-self: stretch; width: 2px; margin: 2px; background: linear-gradient(90deg, #b8b8b8 50%, #f4f4f4 50%); flex: none;`;
const Menu = styled.nav`height: 35px; display: flex; align-items: center; margin-left: -13px; padding-bottom: 1px; ${barLine} ${Sep} { margin: 1px 3px 1px 2px; }`;
const MenuItem = styled.button<{ $gap?: boolean }>`padding: 0 7px; margin-left: ${(p) => (p.$gap ? 12 : 0)}px; white-space: nowrap; u { text-underline-offset: 2px; text-decoration-thickness: 1px; }`;

const ToolBar = styled.div`height: 42px; display: flex; align-items: stretch; ${barLine}`;
const ToolBtn = styled.button`width: 39px; display: flex; align-items: center; justify-content: center; flex: none;`;
const DropBtn = styled.button<{ $low?: boolean }>`width: 17px; flex: none; display: flex; justify-content: center; align-items: center; padding-top: ${(p) => (p.$low ? 16 : 0)}px;`;
const Caret = styled.span<{ $s?: number; $c?: string }>`
  width: 0; height: 0; flex: none;
  border: ${(p) => p.$s ?? 3}px solid transparent; border-bottom: 0;
  border-top: ${(p) => (p.$s ?? 3) + 1}px solid ${(p) => p.$c ?? "#000"};
`;
const Start = styled.button`width: 78px; flex: none; display: flex; align-items: center; gap: 5px; svg { margin-left: -9px; }`;
const Grip = styled.span`width: 4px; margin: 5px 1px; flex: none; background: repeating-linear-gradient(#9c9c9c 0 2px, #f4f4f4 2px 4px) 0 0 / 2px 100% no-repeat;`;
const SearchBox = styled.div`
  width: 206px; flex: none; margin: 5px 2px; border: 2px solid #a0a0a0; background: #fff; display: flex; align-items: center; padding-right: 4px;
  input { border: 0; outline: 0; background: none; flex: 1; min-width: 0; padding: 0 2px; height: 24px; }
`;

const FeatureRow = styled.div`height: 94px; display: flex; ${barLine} & + & { height: 95px; }`;
const Group = styled.section<{ $w?: number; $first?: boolean }>`
  display: flex; flex: none; width: ${(p) => (p.$w ? `${p.$w}px` : "auto")};
  margin-left: ${(p) => (p.$first ? -12 : 0)}px;
  border-right: 1px solid #b0b0b0;
`;
const Feature = styled.button`
  width: 120px; flex: none; display: flex; flex-direction: column; align-items: center; padding-top: 5px; gap: 6px; white-space: nowrap;
`;
const FeatureDrop = styled.button`width: 17px; flex: none; display: flex; justify-content: center; padding-top: 44px; height: 52px;`;
const More = styled.div`margin-left: auto; width: 24px; display: flex; flex-direction: column; align-items: center; justify-content: space-between; padding: 4px 0 9px;`;
const Chevrons = styled.button`font: 700 16px/12px "Liberation Sans", sans-serif; height: 12px;`;
const Gap = styled.span<{ $w: number }>`width: ${(p) => p.$w}px; flex: none;`;

const SelectBar = styled.div`
  height: 43px; flex: none; display: flex; align-items: center; padding-bottom: 3px; margin-left: -18px;
  background: linear-gradient(#c4c4c4, #d3d3d3); border-top: 2px solid #a8a8a8; border-bottom: 1px solid #b4b4b4;
  ${ToolBtn} { width: 38px; } ${DropBtn} { width: 15px; } ${Sep} { margin: 0 3px; }
`;
const SnapBar = styled.div`
  height: 42px; flex: none; display: flex; align-items: stretch; background: #d9d9d9; border-bottom: 1px solid #b0b0b0; box-shadow: inset 0 1px #f4f4f4; margin-left: -17px;
  ${Sep} { margin: 2px 1px; }
  > :last-child { margin-left: auto; }
`;
const Combo = styled.div<{ $w: number; $off?: boolean }>`
  width: ${(p) => p.$w}px; height: 30px; flex: none; display: flex; align-items: stretch; border: 2px solid ${(p) => (p.$off ? "#b0b0b0" : "#7c7c7c")};
  border-radius: 4px; background: ${(p) => (p.$off ? "#d2d2d2" : "#fff")}; overflow: hidden;
  select { appearance: none; border: 0; outline: 0; background: none; flex: 1; min-width: 0; padding: 0 2px; color: ${(p) => (p.$off ? "#9c9c9c" : "#000")}; opacity: 1; ${(p) => p.$off && "text-shadow: 1px 1px #f4f4f4;"} }
  > span { width: 26px; flex: none; display: flex; align-items: center; justify-content: center;
    background: ${(p) => (p.$off ? "linear-gradient(#f2f2f2, #e2e2e4)" : "linear-gradient(#a8cdf4, #5b96dc 50%, #4686d2 50%, #8fd0fa)")};
    border-left: 1px solid ${(p) => (p.$off ? "#b0b0b0" : "#4a80c0")}; }
`;

const Select = ({ w, label, value, off }: { w: number; label: string; value: string; off?: boolean }) => (
  <Combo $w={w} $off={off}>
    <select aria-label={label} disabled={off} defaultValue={value}><option>{value}</option></select>
    <span><Caret $s={5} $c={off ? "#999" : "#000"} /></span>
  </Combo>
);

/* ---------- workspace ---------- */

const Workspace = styled.main`flex: 1; min-height: 0; display: flex;`;
const Rail = styled.aside`width: 19px; flex: none; background: linear-gradient(90deg, #aaa, #b6b6b6 70%, #8c8c8c); display: flex; flex-direction: column; border-right: 1px solid #888;`;
const RailTop = styled.button`height: 46px; flex: none; overflow: hidden; display: flex; align-items: flex-start; padding-top: 8px;`;
const RailTab = styled.button<{ $on?: boolean; $gap?: number }>`
  height: 49px; margin-bottom: ${(p) => p.$gap ?? 1}px; flex: none; overflow: hidden; display: flex; align-items: center;
  background: ${(p) => (p.$on ? "#ebebeb" : "#d2d2d2")}; border: solid ${(p) => (p.$on ? "#ebebeb" : "#777")}; border-width: 1px 1px 1px 0;
`;
const Navigator = styled.section`width: 516px; flex: none; background: #ebebeb; border-right: 2px solid #8a8a8a; border-top: 1px solid #909090; padding: 0 9px 5px 7px; display: flex; flex-direction: column;`;
const NavHead = styled.div`height: 42px; flex: none; display: flex; align-items: center; justify-content: space-between; padding: 4px 4px 0 5px; h2 { font-size: 18px; margin: 0; }`;
const MaxBtn = styled.button`width: 19px; height: 18px; border: 2px solid #000; border-top-width: 4px;`;
const TreeWrap = styled.div`flex: 1; min-height: 0; overflow: hidden; border: 1px solid #707070; background: #fff; padding: 1px;`;
const Tree = styled.table`
  width: 100%; table-layout: fixed; border-collapse: separate; border-spacing: 0; color: #333;
  th { height: 28px; padding: 0 6px; text-align: left; font-weight: 400; color: #111; border-right: 1px solid #a8a8a8; border-bottom: 1px solid #888; background: linear-gradient(#f5f6f6, #eceeee 50%, #dadddf 50%, #d6d9db); }
  td { height: 28px; padding: 0; border-right: 1px solid #e0e0e0; border-bottom: 1px solid #e0e0e0; white-space: nowrap; overflow: hidden; }
  tbody tr:nth-child(even) td { background: #f6f6f6; }
  th:last-child, td:last-child { border-right: 0; }
`;
const NameHead = styled.span`display: flex; align-items: center; gap: 21px;`;
const UpCaret = styled.span`border: 5px solid transparent; border-top: 0; border-bottom: 6px solid #111;`;
const Node = styled.div<{ $child?: boolean; $bold?: boolean; $line?: "full" | "up" | "none" }>`
  position: relative; height: 27px; display: flex; align-items: center; gap: 3px; padding-left: ${(p) => (p.$child ? 24 : 4)}px; font-weight: ${(p) => (p.$bold ? 700 : 400)};
  &::before { content: ""; position: absolute; left: ${(p) => (p.$child ? 28 : 8)}px; top: 0; height: ${(p) => (p.$line === "up" ? 14 : 28)}px; border-left: 1px dotted #888; }
`;
const Twist = styled.button`position: relative; width: 9px; height: 9px; border: 1px solid #888; border-radius: 2px; background: #fff; margin-right: 2px; display: grid; place-items: center; font: 10px/7px "Liberation Sans", sans-serif; color: #000;`;
const Stub = styled.span`width: 9px; height: 1px; margin-right: 2px; border-top: 1px dotted #888;`;
const Tick = styled.label`
  width: 13px; height: 13px; position: relative; flex: none; display: grid; margin-left: 1px;
  input { appearance: none; margin: 0; width: 13px; height: 13px; border: 1px solid #000; background: #fff; }
  svg { position: absolute; left: 1px; top: 1px; pointer-events: none; }
`;
const CheckCell = styled.span`display: block; padding-left: 6px;`;
const Divider = styled.div`height: 12px; flex: none; display: flex; align-items: center; gap: 4px; &::before, &::after { content: ""; height: 2px; background: linear-gradient(#b4b4b4 50%, #fff 50%); flex: 198; }`;
const Handle = styled.span`flex: 95; height: 6px; background: #d4d4d4; border: solid #909090; border-width: 0 1px 1px 0;`;
const Fold = styled.button`
  height: 29px; flex: none; display: flex; align-items: stretch; text-align: left; color: #00005c; border-bottom: 1px solid #8c8c8c; border-right: 1px solid #999; line-height: 28px;
  background: linear-gradient(#fbfbfb, #eff0f0 50%, #dddfe1 50%, #d6d8da); padding-left: 6px;
  > span:last-child { margin-left: auto; width: 29px; border-left: 1px solid #aaa; display: grid; place-items: center; }
`;
const Vee = ({ up, c = "#666", s = 12 }: { up?: boolean; c?: string; s?: number }) => (
  <svg width={s} height={s} viewBox="0 0 12 12" aria-hidden="true"><path d={up ? "M1 11 6 2l5 9" : "M1 1l5 9 5-9"} fill="none" stroke={c} strokeWidth="2.600" /></svg>
);

const SideStrip = styled.aside`width: 60px; flex: none; background: #cfcfcf; display: flex; flex-direction: column; justify-content: flex-end; border-right: 1px solid #b0b0b0;`;
const SideTools = styled.div`height: 42px; margin-bottom: 78px; border-bottom: 1px solid #aaa;`;
const View = styled.section`flex: 1; min-width: 0; display: flex; flex-direction: column;`;
const ViewTab = styled.div`height: 30px; flex: none; background: #ebebeb; border-bottom: 2px solid #555;`;
const Canvas = styled.div`flex: 1; display: flex; align-items: flex-end; padding: 0 0 56px 60px; background: linear-gradient(#27204a, #1e3a62 28%, #145a78 56%, #0f6986 84%);`;

const BottomBar = styled.div`height: 43px; flex: none; background: linear-gradient(#e4e4e4, #cbcbcb); display: flex; ${barLine}`;
const BottomGroup = styled.div`display: flex; border-right: 1px solid #b0b0b0; padding: 0 3px 1px 0; margin-left: -13px;`;
const Status = styled.footer`
  position: relative; height: 30px; flex: none; background: #dadada; border-top: 1px solid #f4f4f4; border-bottom: 2px solid #111; display: flex; align-items: center;
  > strong { margin-left: -18px; flex: none; width: 1018px; }
`;
const Tray = styled.div`margin-left: auto; display: flex; align-items: center; align-self: stretch; padding-right: 12px; ${Sep} { margin: 1px 0; }`;
const TrayIcons = styled.span`width: 74px; display: flex; gap: 6px; padding-left: 1px;`;
const Mark = styled.span`position: absolute; right: 5px; top: 5px; display: flex; gap: 8px; font: 16px/20px ${song}; color: #858585; text-shadow: 1px 1px #f6f6f6; b { font: 13px/20px ${mono}; }`;

/* ---------- dialog ---------- */

const Dialog = styled.section`
  position: absolute; left: 535px; right: 172px; top: 324px; bottom: 193px; display: flex; flex-direction: column;
  background: #ebebeb; border-left: 1px solid #777; border-right: 1px solid #777; border-bottom: 8px solid #151515; border-radius: 8px 8px 4px 8px; overflow: hidden;
`;
const Title = styled.div`
  height: 26px; flex: none; display: flex; align-items: stretch; color: #fff; background: linear-gradient(#3c3e40, #5c5e60 32%, #1a1a1a 36%); border: solid #000; border-width: 1px 0;
  h1 { font: 400 18px/24px ${ui}; margin: 0; padding-left: 5px; flex: 1; }
`;
const TitleBtn = styled.button<{ $left?: boolean }>`width: 26px; display: grid; place-items: center; color: #fff; border: solid #ccc; border-width: ${(p) => (p.$left ? "0 1px 0 0" : "0 0 0 1px")};`;
const Body = styled.div`flex: 1; min-height: 0; display: flex; padding: 9px 8px 0 9px;`;
const Side = styled.div`width: 275px; flex: none; border: solid #8a8a8a; border-width: 1px 0 0 1px; border-bottom: 1px solid #fff; padding-left: 1px; display: flex; flex-direction: column;`;
const SideBody = styled.div`background: #d3d3d3; border: 2px solid #a4a4a4; border-right-width: 1px; padding: 3px 9px 4px 6px; display: flex; flex-direction: column; color: #000;`;
const Line = styled.div<{ $h?: number }>`height: ${(p) => p.$h ?? 34}px; display: flex; align-items: center; justify-content: space-between; white-space: nowrap;`;
const SideRule = styled.div`height: 2px; background: #f4f4f4; border-top: 1px solid #b4b4b4;`;
const CheckLine = styled.label`
  display: flex; align-items: center; gap: 10px;
  input { appearance: none; margin: 0; width: 16px; height: 16px; border: 2px solid #777; border-radius: 2px; background: linear-gradient(135deg, #ccc, #f6f6f6); }
  input:checked { border-color: #4a6a94; background: linear-gradient(#e8f8ff, #58c4f4); }
  position: relative; svg { position: absolute; left: 2px; }
`;
const SmallBtn = styled.button<{ $off?: boolean }>`width: 30px; height: 30px; flex: none; display: grid; place-items: center; border: 2px solid ${(p) => (p.$off ? "#b4b4b4" : "#8a8a8a")}; border-radius: 4px; background: linear-gradient(#fdfdfd, #e0e0e0 50%, #cfcfcf 50%, #f4f4f4);`;
const Splitter = styled.div`width: 12px; margin: 0 3px 0 5px; flex: none; border: 2px solid #70757a; border-radius: 5px; background: linear-gradient(#eef0f0, #c6c8ca 50%, #e4e6e6); display: flex; flex-direction: column; align-items: center; justify-content: center; gap: 6px;`;
const LeftTri = styled.span`border: 4px solid transparent; border-left: 0; border-right: 5px solid #333;`;
const Right = styled.div`flex: 1; min-width: 0; display: flex; flex-direction: column;`;
const GridBox = styled.div`height: 500px; flex: none; background: #f0f0f0; display: flex; flex-direction: column;`;
const GridMain = styled.div`display: flex; height: 474px;`;
const GridClip = styled.div`width: 1093px; max-width: 100%; overflow: hidden; background: #fff;`;
const VBar = styled.div`width: 5px; border-radius: 3px; background: #868686; margin: 74px 0 26px 10px;`;
const HBar = styled.div`flex: 1; display: flex; align-items: center; padding: 0 36px 0 9px; gap: 9px;`;
const HThumb = styled.span`width: 958px; height: 6px; border-radius: 3px; background: #868686; margin-right: auto; box-shadow: 0 0 0 2px #dcdcdc;`;
const SideTri = styled.span<{ $r?: boolean }>`border: 8px solid transparent; border-${(p) => (p.$r ? "right" : "left")}: 0; border-${(p) => (p.$r ? "left" : "right")}: 8px solid #d8d8d8;`;
const Grid = styled.table`
  width: 1110px; table-layout: fixed; border-collapse: separate; border-spacing: 0; font: 18px/20px ${song}; color: #333;
  thead th { height: 31px; padding: 6px 0 0 7px; font-weight: 400; text-align: left; vertical-align: top; line-height: 24px; border-right: 1px solid #dedede; color: #222; white-space: nowrap; overflow: hidden; }
  td { height: 26px; padding: 0 0 0 4px; border-right: 1px solid #d6d6d6; border-bottom: 1px solid #d6d6d6; white-space: nowrap; overflow: hidden; }
  tbody tr:nth-child(even) td { background: #f4f4f4; }
  tbody th { height: 26px; padding: 0; font-weight: 400; text-align: center; border-right: 1px solid #d6d6d6; background: #fff; }
  th:nth-child(3), td:nth-child(3) { border-right: 1px solid #000; }
  td:nth-child(2) { padding-left: 34px; }
  thead th:nth-child(2) { padding-left: 10px; }
  tbody tr td.bad { background: #ffc0cb; }
  tbody tr td.err { background: #d2691e; color: #222; }
`;
const Latin = styled.span`font: 15px/16px ${mono}; color: #111;`;
const Pick = styled.span`display: flex; align-items: center; padding-right: 6px; select { appearance: none; border: 0; background: none; padding: 0; flex: 1; min-width: 0; outline: 0; height: 24px; }`;
const Flag = styled.span`display: flex; align-items: center; gap: 5px;`;
const Pull = styled.button`width: 44px; height: 12px; margin: 3px 0 3px 1px; border: 2px solid #777; border-radius: 3px; background: #f0f0f0; display: flex; align-items: center; justify-content: space-evenly; flex: none;`;
const Memo = styled.textarea`flex: 1; min-height: 0; border: 1px solid #666; background: #fff; resize: none; outline: 0; display: block;`;
const Collapse = styled.button`height: 15px; margin: 5px 5px 2px 6px; flex: none; display: flex; align-items: center; justify-content: center; gap: 5px; background: linear-gradient(#fafafa, #f0f1f1 50%, #dcdedf 50%, #d4d6d7); border-bottom: 1px solid #999;`;
const Actions = styled.div`height: 43px; margin: 0 5px 0 6px; border-top: 1px solid #b4b4b4; box-shadow: inset 0 1px #fff; display: flex; gap: 7px; justify-content: flex-end; align-items: center; flex: none; padding: 0 81px 0 0;`;
const Act = styled.button<{ $go?: boolean }>`
  width: 64px; height: 30px; border: 2px solid ${(p) => (p.$go ? "#3c7830" : "#7c7c7c")}; border-radius: 4px; line-height: 22px;
  background: ${(p) => (p.$go ? "linear-gradient(#c4e8bc, #8ed080 50%, #5cb848 50%, #a8f490)" : "linear-gradient(#fbfbfb, #e4e4e6 50%, #cdcdd1 50%, #f0f0f0)")};
`;

const Alert = styled.section`position: absolute; right: 0; top: 975px; bottom: 72px; width: 296px; display: flex; border: solid #888; border-width: 1px 0 1px 1px; background: linear-gradient(#e6e6e6, #b4b4b4);`;
const AlertGrip = styled.div`
  width: 13px; flex: none; background: linear-gradient(90deg, #888, #333 40%, #0c0c0c); display: flex; padding: 6px 3px; 
  &::before { content: ""; flex: 1; background: radial-gradient(circle, #b8b8b8 1px, transparent 1px) 0 0 / 4px 4px; }
`;
const AlertBox = styled.div`margin: 4px 6px 3px; width: 243px; flex: none; background: #d1d1d1; border: 2px solid #9c9c9c; border-bottom-color: #f4f4f4; padding: 2px 0 0 7px; h2 { font: 400 18px/24px ${ui}; color: #00005c; margin: 0 0 6px; }`;
const AlertText = styled.div`display: flex; gap: 10px; align-items: flex-start; color: #000; p { margin: 0; white-space: nowrap; }`;
const CloseBtn = styled.button`width: 22px; height: 22px; margin-top: 5px; border: 2px solid #777; border-radius: 4px; background: linear-gradient(#fdfdfd, #d4d4d4); display: grid; place-items: center; flex: none;`;

/* ---------- data ---------- */

type M = [string, string?] | "|" | ">";
const menu: M[] = [["文件", "F"], "|", ["编辑", "E"], ["视图", "V"], "|", ["插入", "S"], ["格式", "R"], ["工具", "T"], ["装配", "A"], ["信息", "I"], ["分析", "L"], ">", ["首选项", "P"], ["窗口", "O"], ["GC工具箱"], ["帮助", "H"]];

const tools = (list: string[]) =>
  list.map((n, i) =>
    n === "|" ? <Sep key={i} /> : n === "v" || n === "V" ? <DropBtn key={i} $low={n === "V"} aria-label="更多"><Caret $s={n === "V" ? 4 : 3} /></DropBtn> : <ToolBtn key={i} aria-label={n}><Icon name={n} size={n === "white" ? 32 : 30} /></ToolBtn>
  );

type F = [string, string, boolean?];
const features = (list: F[]) =>
  list.map(([icon, label, drop]) => (
    <React.Fragment key={label}>
      <Feature><Icon name={icon} size={30} />{label}</Feature>
      {drop && <FeatureDrop aria-label={`${label}选项`}><Caret /></FeatureDrop>}
    </React.Fragment>
  ));

const rows: [string, string, string, string, string, string, string?][] = [
  ["Cyli…", "Vector(0.000000,0.0…", "矢量(0,0…", "", "", "矢量"],
  ["Cyli…", "Vector(0.000000,0.0…", "矢量(0,0…", "", "", "矢量"],
  ["spri…", "10", "10", "°", "角度", "数字"],
  ["spri…", "360", "360", "°", "角度", "数字", "定义一个…"],
  ["spri…", "spring_a/(spring_nz…", "10", "°", "角度", "数字"],
  ["spri…", "4.5", "4.5", "mm", "长度", "数字"],
  ["spri…", "32.0", "32", "mm", "长度", "数字"],
  ["spri…", "1", "1", "", "无单位", "数字", "定义一个…"],
  ["spri…", "spring_tempH-spring…", "58.25", "mm", "长度", "数字", "中间有效…"],
  ["spri…", "6", "6", "", "无单位", "数字", "定义弹簧…"],
  ["spri…", "2.0", "2", "", "无单位", "数字"],
  ["spri…", "spring_height/sprin…", "9.708333…", "mm", "长度", "数字", "中间有效…"],
  ["spri…", "spring_Dia/2", "16", "mm", "长度", "数字", "弹簧中径…"],
  ["spri…", "p13", "75", "mm", "长度", "数字", "定义自由…"],
  ["spri…", "spring_n+spring_nz", "8", "", "无单位", "数字", "定义弹簧…"],
  ["spri…", "3*spring_d/4*2", "6.75", "mm", "长度", "数字"],
  ["spri…", "1", "1", "", "无单位", "数字"],
];

const Run = ({ t }: { t: string }) => (
  <>{t.split(/([\x20-\x7e]+)/).filter(Boolean).map((s, i) => (/^[\x20-\x7e]/.test(s) ? <Latin key={i}>{s}</Latin> : <React.Fragment key={i}>{s}</React.Fragment>))}</>
);

const UnitSelect = styled.select<{ $l?: boolean }>`&& { font: ${(p) => (p.$l ? `15px/20px ${mono}` : `18px/20px ${song}`)}; padding-top: ${(p) => (p.$l ? 2 : 0)}px; }`;

const treeTop: [string, string, boolean?][] = [["tView", "模型视图"], ["tCam", "摄像机", true], ["tExp", "用户表达式"], ["tFold", "组"], ["tMea", "测量"], ["tFold", "模型历史记录"]];
const treeKids: [string, string][] = [["tCsys", "基准坐标系 (0)"], ["tGrp", `特征组 (15) "...`], ["tCyl", "圆柱 (17)"], ["tCyl", "圆柱 (18)"], ["tRul", "测量 [距离] (..."]];

const ops: [string, string][] = [["新建表达式", "newExp"], ["创建/编辑部件间表达式", "exp1"], ["创建多个部件间表达式", "exp2"], ["编辑多个部件间表达式", "exp3"], ["替换表达式", "repl"], ["打开被引用部件", "open"], ["更新以获取外部更改", "excel"]];

const rail: { label: string; gap?: number; on?: boolean; art: React.ReactNode }[] = [
  { label: "装配导航器", art: <>{goldBox(-6, 6, 9)}{goldBox(3, 20, 9)}<path d="M5 14h11M0 24h3" stroke="#222" strokeWidth="1.500" /></> },
  { label: "约束导航器", art: <><path d="M1 2v32" stroke="#222" strokeDasharray="3 2" /><path d="M9 4v14L2 11z" fill="#1818c8" /><path d="M3 20v14h12z" fill="#d01818" stroke="#601010" /></> },
  { label: "部件导航器", on: true, gap: 1, art: <><path d="M0 4v12" stroke="#901060" strokeWidth="3" /><path d="M4 16h12" stroke="#222" strokeWidth="1.500" /><circle cx="8" cy="29" r="6" fill="none" stroke="#901060" strokeWidth="1.500" /><circle cx="8" cy="29" r="2" fill="none" stroke="#901060" /></> },
  { label: "重用库", gap: 13, art: <><path d="M-2 8 7 4v26l-9 4z" fill="#48c038" stroke="#187818" /><path d="M2 10 8 4h9v22l-6 8H2z" fill="#38a0e8" stroke="#1858a0" /><path d="M2 10h9v24M11 10l6-6M2 20h9M11 20l6-6" fill="none" stroke="#0c4890" /></> },
  { label: "高清工具", gap: 13, art: <><circle cx="-1" cy="26" r="9" fill="#2080e8" /><path d="M0 12q11 2 11 14M0 4q16 2 17 18" fill="none" stroke="#3070c0" strokeWidth="4" /></> },
  { label: "浏览器", gap: 13, art: <><path d="M-2 3H9l6 7v24H-2z" fill="#f6faff" stroke="#3878c0" strokeWidth="2" /><circle cx="1" cy="22" r="8" fill="#3890d8" /><path d="M0 15q6 2 6 8t-6 6" fill="#38a038" /></> },
  { label: "历史记录", art: <><circle cx="0" cy="19" r="15" fill="#eef2fa" stroke="#5878a0" strokeWidth="3" /><path d="M1 8v12h9" stroke="#222" strokeWidth="2" fill="none" /></> },
  { label: "向导", art: <path d="m0 12 12 16" stroke="#111" strokeWidth="4" /> },
  { label: "向导组", art: <><path d="M0 10h16M0 16h14M0 24q10-6 16-6" stroke="#5080d0" strokeWidth="2" fill="none" /><path d="m2 14 11 15" stroke="#111" strokeWidth="4" /></> },
  { label: "工具", art: <><path d="M0 12q6-7 14-3l-3 4-4-1v6l6 12-4 3L2 22l-3 4" fill="#d0d0d0" stroke="#222" strokeWidth="2" /></> },
];

/* ---------- page ---------- */

export default function App() {
  return (
    <Frame lang="zh-CN">
      <Global />
      <Defs />
      <TopStrip><WinKey $c="#666" aria-label="最小化" /><WinKey $c="#666" aria-label="最大化" /><WinKey $c="#f08070" aria-label="关闭" /></TopStrip>
      <Ribbon>
        <Menu>
          {menu.map((m, i) => {
            if (m === "|") return <Sep key={i} />;
            if (m === ">") return null;
            return <MenuItem key={i} $gap={menu[i - 1] === ">"}>{m[0]}{m[1] && <>(<u>{m[1]}</u>)</>}</MenuItem>;
          })}
        </Menu>
        <ToolBar>
          <Start><Icon name="nx" size={30} />启动<Caret $s={4} /></Start>
          {tools(["file", "open", "save", "|", "cut", "copy", "paste", "del", "|", "undo", "v", "redo", "|", "ruler", "v", "|", "swatch", "v", "|"])}
          <SearchBox><input aria-label="查找命令" defaultValue="齿条" /><Icon name="glass" size={22} /></SearchBox>
          {tools(["V", "|"])}
          <Grip />
          {tools(["fit", "v", "seat", "v", "cube", "v", "white", "v", "|", "clip", "clip2", "person", "V", "|"])}
          <Grip />
          {tools(["palette", "|", "vis", "v", "|", "ruler", "V", "|"])}
        </ToolBar>
        <FeatureRow>
          <Group $first $w={1369}>
            {features([["plane", "基准平面", true], ["extrude", "拉伸", true], ["hole", "孔"], ["rib", "筋板"]])}
            <Sep />
            {features([["array", "阵列特征", true], ["geo", "阵列几何特征"], ["unite", "合并", true], ["trim", "修剪体", true], ["shell", "抽壳"], ["thick", "加厚"]])}
            <More><Chevrons aria-label="更多命令">»</Chevrons><Caret $s={4} /></More>
          </Group>
          <Group $w={635}>
            <Grip />
            {features([["offReg", "偏置区域", true], ["moveFace", "移动面"], ["pull", "拉出面"], ["resize", "调整面大小"]])}
            <More><Chevrons aria-label="更多命令">»</Chevrons><Caret $s={4} /></More>
          </Group>
          <Group $w={147}>
            <Grip />
            {features([["rmParam", "移除参数"]])}
            <More><span /><Caret $s={4} /></More>
          </Group>
        </FeatureRow>
        <FeatureRow>
          <Group $first $w={877}>
            {features([["curves", "通过曲线组"], ["mesh", "通过曲线网格"], ["nside", "N 边曲面"], ["sweep", "扫掠"], ["varsweep", "变化扫掠"], ["tube", "扫掠体"], ["law", "规律延伸"]])}
            <FeatureDrop aria-label="规律延伸选项"><Caret /></FeatureDrop>
            <More><span /><Caret $s={4} /></More>
          </Group>
          <Gap $w={9} />
          <Group $w={1107}>
            <Grip />
            {features([["line", "直线"], ["arc", "圆弧/圆"], ["helix", "螺旋"], ["spline", "艺术样条"], ["offset", "偏置曲线"], ["bridge", "桥接曲线"], ["project", "投影曲线"], ["intersect", "相交曲线"], ["iso", "等斜度曲线"]])}
            <More><span /><Caret $s={4} /></More>
          </Group>
        </FeatureRow>
      </Ribbon>
      <SelectBar>
        <Select w={219} label="类型过滤器" value="无选择过滤器" />
        <Gap $w={8} />
        <Select w={228} label="选择范围" value="仅在工作部件内" />
        <Gap $w={3} />
        {tools(["assoc", "|", "resetF", "redF", "v", "back", "find", "|", "dashcube", "rect", "v", "|", "slab", "gcube", "|"])}
        <Gap $w={4} />
        <Select w={230} label="面规则" value="单个面" off />
        <Gap $w={6} />
        <Select w={230} label="曲线规则" value="单条曲线" off />
        <Gap $w={6} />
        <Select w={230} label="体规则" value="单个体" off />
        <Gap $w={4} />
        {tools(["chain", "right"])}
      </SelectBar>
      <SnapBar>
        {tools(["sMove", "sLine", "sMid", "sCtl", "sPoly", "sSpl", "sInt", "sCen", "sQuad", "sPt", "sOn", "sFace", "sMesh", "|", "sGrid"])}
        <DropBtn $low aria-label="更多"><Caret $s={4} /></DropBtn>
      </SnapBar>

      <Workspace>
        <Rail>
          <RailTop aria-label="设置">
            <svg width="18" height="24" viewBox="0 0 18 24" aria-hidden="true"><path d="M0 2q3-1 3 2l-1 2 3 1v4l-3 1 1 2q0 3-3 2" fill="none" stroke="#222" strokeWidth="1.500" /></svg>
          </RailTop>
          {rail.map((r) => (
            <RailTab key={r.label} aria-label={r.label} $on={r.on} $gap={r.gap}>
              <svg width="18" height="38" viewBox="0 0 18 38" aria-hidden="true">{r.art}</svg>
            </RailTab>
          ))}
        </Rail>
        <Navigator>
          <NavHead><h2>部件导航器</h2><MaxBtn aria-label="最大化" /></NavHead>
          <TreeWrap>
            <Tree>
              <colgroup><col width="200" /><col width="100" /><col width="100" /><col /></colgroup>
              <thead><tr><th><NameHead>名称<UpCaret /></NameHead></th><th>最新</th><th>附注</th><th /></tr></thead>
              <tbody>
                {treeTop.map(([icon, label, chk], i) => (
                  <tr key={label}>
                    <td><Node $line={i === 5 ? "up" : "full"}><Twist aria-label="展开">{i === 5 ? "−" : "+"}</Twist>{chk && <Icon name="check" size={13} />}<Icon name={icon} size={17} />{label}</Node></td>
                    <td /><td /><td />
                  </tr>
                ))}
                {treeKids.map(([icon, label], i) => (
                  <tr key={label}>
                    <td>
                      <Node $child $bold={i === 4} $line={i === 4 ? "up" : "full"}>
                        {i === 1 ? <Twist aria-label="展开">+</Twist> : <Stub />}
                        <Tick><input type="checkbox" defaultChecked aria-label={label} /><Icon name="check" size={11} /></Tick>
                        <Icon name={icon} size={15} />{label}
                      </Node>
                    </td>
                    <td><CheckCell><Icon name="check" size={12} /></CheckCell></td><td /><td />
                  </tr>
                ))}
                {Array.from({ length: 17 }, (_, i) => <tr key={i}><td /><td /><td /><td /></tr>)}
              </tbody>
            </Tree>
          </TreeWrap>
          <Divider><Handle /></Divider>
          {["相关性", "细节", "预览"].map((t) => <Fold key={t}><span>{t}</span><span><Vee /></span></Fold>)}
        </Navigator>
        <SideStrip>
          <SideTools>
            <svg width="58" height="40" viewBox="0 0 58 40" aria-hidden="true">
              <path d="m7 0 7 6-7 6z" fill="#6a9a70" /><path d="M27 5v13M20 18h14" stroke="#8a7a7a" strokeWidth="1.500" /><path d="m45 3h6l-3 4zM15 27v9l-4-4.500z" />
            </svg>
          </SideTools>
        </SideStrip>
        <View>
          <ViewTab />
          <Canvas>
            <svg width="60" height="64" viewBox="0 0 60 64" aria-label="坐标系">
              <path d="M10 19 30 16 49 20v23l-20 4-19-4z" fill="#b8c0c8" opacity=".85" stroke="#98a4ac" /><path d="M30 16v31" stroke="#98a4ac" />
              <path d="M8 48V0" stroke="#1848f8" strokeWidth="2.500" /><path d="m5 8 3-12 4 12z" fill="#1030e8" />
              <path d="m8 48 30 4" stroke="#208030" strokeWidth="2.500" /><path d="M8 48h26" stroke="#d01818" strokeWidth="4" /><path d="m31 43 12 4-12 5z" fill="#c01818" />
              <text x="43" y="52" fontSize="13" fontFamily="Liberation Sans, sans-serif" fill="#e02828">X</text>
              <text x="38" y="60" fontSize="10" fontFamily="Liberation Sans, sans-serif" fill="#208838">Y</text>
              <circle cx="8" cy="48" r="5" fill="#e0e0e0" />
            </svg>
          </Canvas>
        </View>
      </Workspace>

      <BottomBar>
        <BottomGroup>{tools(["b0", "bAdd", "bMove", "bMir", "|", "bClip", "V"])}</BottomGroup>
      </BottomBar>
      <Status>
        <strong>选择特征以加载表达式</strong><Sep />
        <Tray>
          <Sep /><Gap $w={18} /><Sep />
          <TrayIcons>
            <svg width="16" height="16" viewBox="0 0 16 16" aria-hidden="true"><path d="M0 0h16v16H0z" fill="#6c8494" /><path d="m2 12 4-6 3 3 5-6" stroke="#445" fill="none" strokeWidth="2" /></svg>
            <svg width="16" height="16" viewBox="0 0 16 16" aria-hidden="true"><path d="M1 5V1h4M11 1h4v4" fill="none" stroke="#fff" strokeWidth="2" /><path d="M3 4h10v8H3z" fill="#a8c4f0" stroke="#444" strokeWidth="2" /></svg>
          </TrayIcons>
          <Sep />
        </Tray>
        <Mark><span><b>UG</b>爱好者论坛</span><b>WWW.UGSNX.COM</b></Mark>
      </Status>

      <Dialog role="dialog" aria-label="表达式">
        <Title>
          <TitleBtn $left aria-label="对话框选项"><Icon name="gear" size={13} /></TitleBtn>
          <h1>表达式</h1>
          <TitleBtn aria-label="重置"><Icon name="reset" size={13} /></TitleBtn>
          <TitleBtn aria-label="关闭"><Icon name="close" size={13} /></TitleBtn>
        </Title>
        <Body>
          <Side>
            <Fold><span>可见性</span><span><Vee up /></span></Fold>
            <SideBody>
              <Line $h={30}>显示 17 个表达式，共 49 个</Line>
              <Line>显示<Select w={151} label="显示" value="用户定义的表达式" /></Line>
              <Line>表达式组<Select w={151} label="表达式组" value="仅显示活动的" /></Line>
              <Line $h={30}><CheckLine><input type="checkbox" defaultChecked />显示锁定的公式表达式<svg width="12" height="12" viewBox="0 0 12 12" aria-hidden="true"><path d="m1 6 4 4 6-9" fill="none" stroke="#103868" strokeWidth="3" /></svg></CheckLine></Line>
              <SideRule />
              <Line $h={38}><CheckLine><input type="checkbox" />启用高级过滤</CheckLine><SmallBtn $off aria-label="过滤"><Icon name="funnel" size={22} /></SmallBtn></Line>
            </SideBody>
            <Fold><span>操作</span><span><Vee up /></span></Fold>
            <SideBody>
              {ops.map(([t, ic]) => <Line key={t}>{t}<SmallBtn aria-label={t}><Icon name={ic} size={24} /></SmallBtn></Line>)}
            </SideBody>
          </Side>
          <Splitter><LeftTri /><LeftTri /><LeftTri /></Splitter>
          <Right>
            <GridBox>
              <GridMain>
                <GridClip>
                  <Grid>
                    <colgroup>{[32, 100, 200, 100, 100, 100, 100, 100, 50, 100, 100, 28].map((w, i) => <col key={i} width={w} />)}</colgroup>
                    <thead><tr><th /><th><Latin>↑ </Latin>名称</th>{["公式", "值", "单位", "量纲", "类型", "源", "状态", "附注", "检查", "组"].map((h) => <th key={h} scope="col">{h}</th>)}</tr></thead>
                    <tbody>
                      {rows.map(([name, f, v, u, d, t, note], i) => {
                        const bad = f === "p13";
                        const dimPick = i === 14 || i === 16;
                        return (
                          <tr key={i}>
                            <th scope="row"><Run t={String(i + 3)} /></th>
                            <td><Run t={name} /></td>
                            <td className={bad ? "bad" : undefined}><Run t={f} /></td>
                            <td className={bad ? "err" : undefined}>{bad ? <Flag><Icon name="link" size={14} /><Run t={v} /></Flag> : <Run t={v} />}</td>
                            <td>{u && <Pick><UnitSelect $l aria-label="单位" defaultValue={u}><option>{u}</option></UnitSelect><Caret $s={4} /></Pick>}</td>
                            <td>{dimPick ? <Pick><UnitSelect aria-label="量纲" defaultValue={d}><option>{d}</option></UnitSelect><Caret $s={4} /></Pick> : d}</td>
                            <td>{t}</td><td /><td /><td>{note}</td><td /><td>默</td>
                          </tr>
                        );
                      })}
                    </tbody>
                  </Grid>
                </GridClip>
                <VBar />
              </GridMain>
              <HBar><SideTri /><HThumb /><SideTri $r /></HBar>
            </GridBox>
            <Pull aria-label="展开"><Caret $c="#444" /><Caret $c="#444" /><Caret $c="#444" /></Pull>
            <Memo aria-label="信息" />
          </Right>
        </Body>
        <Collapse aria-label="折叠"><Vee c="#111" s={10} /><Vee c="#111" s={10} /><Vee c="#111" s={10} /></Collapse>
        <Actions><Act>确定</Act><Act $go>应用</Act></Actions>
      </Dialog>

      <Alert role="alert">
        <AlertGrip />
        <AlertBox>
          <h2>警报</h2>
          <AlertText>
            <Icon name="warn" size={14} />
            <p>表达式对于 NX 中的更新<br />无效。<br />修改的表达式由特征 规<br />律曲线定义的样条(2) 使<br />用，<br />但取决于 measure（具<br />有较晚的时间戳记 测量 [<br />距离](19)）<br />spring_tempH: 无法引<br />用比特征晚创建的度量</p>
          </AlertText>
        </AlertBox>
        <CloseBtn aria-label="关闭警报"><Icon name="redx" size={14} /></CloseBtn>
      </Alert>
    </Frame>
  );
}
